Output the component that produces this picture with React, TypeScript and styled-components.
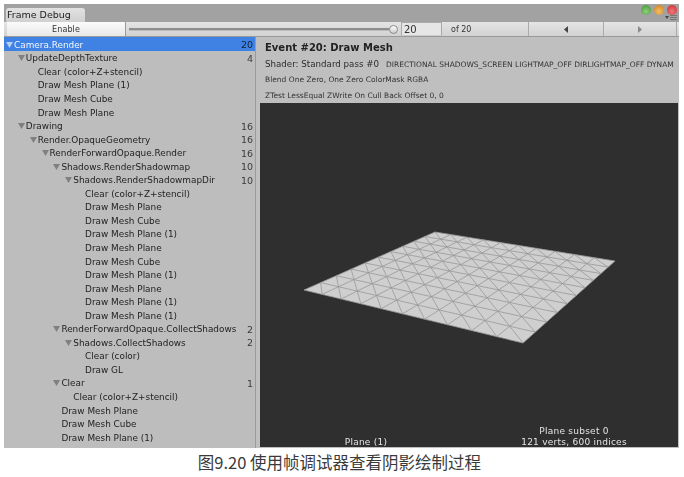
import React from "react";
import styled, { createGlobalStyle } from "styled-components";

const Global = createGlobalStyle`
  html, body { margin: 0; padding: 0; background: #fff; }
  #root { width: 684px; height: 477px; overflow: hidden; }
  * { box-sizing: border-box; }
`;

const FONT = `"DejaVu Sans", "Noto Sans CJK SC", sans-serif`;

const Page = styled.div`
  width: 684px; height: 477px; padding: 4px 5px 0 4px;
  display: flex; flex-direction: column; background: #fff;
  font-family: ${FONT}; color: #222;
`;
const Win = styled.div`
  height: 444px; display: flex; flex-direction: column; background: #bfbfbf;
  filter: blur(0.3px);
`;
const TabBar = styled.div`
  height: 18px; flex: none; background: #a2a2a2; padding: 4px 2px 0 2px;
  display: flex; justify-content: space-between;
`;
const Tab = styled.div`
  width: 79px; height: 14px; background: linear-gradient(#e2e2e2, #d0d0d0);
  border-radius: 3px 3px 0 0; font-size: 9.5px; line-height: 14px; padding-left: 1px; color: #222;
`;
const Controls = styled.div`
  display: flex; flex-direction: column; align-items: flex-end; gap: 0; margin-top: -3px;
`;
const Lights = styled.div`display: flex; gap: 3px;`;
const Light = styled.span<{ $c: string; $d: string }>`
  width: 10px; height: 10px; border-radius: 50%;
  background: radial-gradient(circle at 50% 65%, ${p => p.$c}, ${p => p.$d});
`;
const Toolbar = styled.div`
  height: 15px; flex: none; display: flex; align-items: stretch;
  background: linear-gradient(#e4e4e4, #d2d2d2); border-bottom: 1px solid #999;
  padding-left: 3px;
`;
const EnableBtn = styled.div`
  width: 119px; background: linear-gradient(#fbfbfb, #e8e8e8); text-align: center;
  font-size: 8px; line-height: 15px; color: #333; border-right: 1px solid #999; letter-spacing: 0.1px;
`;
const SliderBox = styled.div`
  width: 275px; padding: 0 3px 0 3px; display: flex; align-items: center; position: relative;
`;
const Track = styled.div`flex: 1; height: 3px; background: #8d8d8d; border-bottom: 1px solid #bbb;`;
const Thumb = styled.div`
  width: 9px; height: 9px; border-radius: 50%; background: linear-gradient(#fff, #ccc);
  border: 1px solid #8a8a8a; flex: none;
`;
const CountInput = styled.div`
  width: 41px; background: #e6e6e6; border: 1px solid #aaa; border-bottom-color: #ccc;
  font-size: 10px; line-height: 13px; padding-left: 2px; color: #333;
`;
const OfLabel = styled.div`
  width: 87px; padding-left: 9px; font-size: 8px; line-height: 15px; color: #333;
  border-right: 1px solid #aaa;
`;
const StepBtn = styled.div<{ $w: number }>`
  width: ${p => p.$w}px; display: flex; align-items: center; justify-content: center;
  border-right: 1px solid #aaa;
`;
const Body = styled.div`flex: 1; display: flex; min-height: 0;`;
const Tree = styled.div`width: 251px; flex: none; background: #bdbdbd;`;
const Row = styled.div<{ $sel?: boolean }>`
  height: 13.55px; display: flex; align-items: center; font-size: 8.9px;
  white-space: nowrap; padding: 2px 2px 0 0; color: ${p => (p.$sel ? "#f2f6ff" : "#222")};
  background: ${p => (p.$sel ? "#3f82e4" : "transparent")};
`;
const Label = styled.span<{ $level: number }>`
  flex: 1; padding-left: ${p => 10 + p.$level * 11.85}px; position: relative;
`;
const Arrow = styled.svg`
  position: absolute; margin-left: -8px; top: 2px; width: 7px; height: 6px;
`;
const Count = styled.span<{ $sel?: boolean }>`
  color: ${p => (p.$sel ? "#123" : "#3a3a3a")}; font-size: 9.5px;
`;
const Divider = styled.div`width: 3px; flex: none; background: #bfbfbf; border-left: 1px solid #9a9a9a;`;
const Detail = styled.div`flex: 1; min-width: 0; display: flex; flex-direction: column; padding: 0 1px 1px 2px; overflow: hidden;`;
const Info = styled.div`height: 66px; flex: none; padding-left: 5px; white-space: nowrap; overflow: hidden;`;
const InfoLine = styled.div<{ $h: number }>`
  height: ${p => p.$h}px; display: flex; align-items: center;
`;
const EventTitle = styled.span`font-size: 10px; font-weight: bold; color: #222;`;
const ShaderText = styled.span`font-size: 8.7px; color: #2c2c2c; margin-right: 7px;`;
const Small = styled.span`font-size: 7.5px; color: #333;`;
const Preview = styled.div`
  flex: 1; background: #2f2f2f; position: relative; display: flex; align-items: flex-end;
`;
const MeshSvg = styled.svg`position: absolute; left: 0; top: 0;`;
const Stats = styled.div`
  flex: 1; display: grid; grid-template-columns: 1fr 1fr; align-items: end; position: relative;
  font-size: 9px; line-height: 11px; color: #e4e4e4; text-align: center; letter-spacing: 0.25px;
  margin-bottom: -1px; padding-left: 2px;
`;
const Caption = styled.div`
  text-align: center; font-size: 16.5px; line-height: 22px; margin-top: 3px; color: #3a3a3a;
  font-family: "Noto Sans CJK SC", sans-serif; padding-right: 4px;
`;

type R = { t: string; l: number; o?: boolean; c?: number };
const rows: R[] = [
  { t: "UpdateDepthTexture", l: 1, o: true, c: 4 },
  { t: "Clear (color+Z+stencil)", l: 2 },
  { t: "Draw Mesh Plane (1)", l: 2 },
  { t: "Draw Mesh Cube", l: 2 },
  { t: "Draw Mesh Plane", l: 2 },
  { t: "Drawing", l: 1, o: true, c: 16 },
  { t: "Render.OpaqueGeometry", l: 2, o: true, c: 16 },
  { t: "RenderForwardOpaque.Render", l: 3, o: true, c: 16 },
  { t: "Shadows.RenderShadowmap", l: 4, o: true, c: 10 },
  { t: "Shadows.RenderShadowmapDir", l: 5, o: true, c: 10 },
  { t: "Clear (color+Z+stencil)", l: 6 },
  { t: "Draw Mesh Plane", l: 6 },
  { t: "Draw Mesh Cube", l: 6 },
  { t: "Draw Mesh Plane (1)", l: 6 },
  { t: "Draw Mesh Plane", l: 6 },
  { t: "Draw Mesh Cube", l: 6 },
  { t: "Draw Mesh Plane (1)", l: 6 },
  { t: "Draw Mesh Plane", l: 6 },
  { t: "Draw Mesh Plane (1)", l: 6 },
  { t: "Draw Mesh Plane (1)", l: 6 },
  { t: "RenderForwardOpaque.CollectShadows", l: 4, o: true, c: 2 },
  { t: "Shadows.CollectShadows", l: 5, o: true, c: 2 },
  { t: "Clear (color)", l: 6 },
  { t: "Draw GL", l: 6 },
  { t: "Clear", l: 4, o: true, c: 1 },
  { t: "Clear (color+Z+stencil)", l: 5 },
  { t: "Draw Mesh Plane", l: 4 },
  { t: "Draw Mesh Cube", l: 4 },
  { t: "Draw Mesh Plane (1)", l: 4 },
];

const Tri = ({ color }: { color: string }) => (
  <Arrow viewBox="0 0 7 6"><path d="M0 0H7L3.5 6Z" fill={color} /></Arrow>
);

// Plane corners in preview coordinates (preview origin is 260,103 on the page)
const P = { a: [175, 129], b: [355, 158], c: [263, 240], d: [44, 187] };
function project(u: number, v: number): [number, number] {
  const [x0, y0] = P.a, [x1, y1] = P.b, [x2, y2] = P.c, [x3, y3] = P.d;
  const dx1 = x1 - x2, dx2 = x3 - x2, sx = x0 - x1 + x2 - x3;
  const dy1 = y1 - y2, dy2 = y3 - y2, sy = y0 - y1 + y2 - y3;
  const den = dx1 * dy2 - dx2 * dy1;
  const g = (sx * dy2 - dx2 * sy) / den, h = (dx1 * sy - sx * dy1) / den;
  const A = x1 - x0 + g * x1, B = x3 - x0 + h * x3;
  const D = y1 - y0 + g * y1, E = y3 - y0 + h * y3;
  const w = g * u + h * v + 1;
  return [(A * u + B * v + x0) / w, (D * u + E * v + y0) / w];
}
function meshPath() {
  const n = 10; let d = "";
  const seg = (p: [number, number], q: [number, number]) =>
    (d += `M${p[0].toFixed(1)} ${p[1].toFixed(1)}L${q[0].toFixed(1)} ${q[1].toFixed(1)}`);
  for (let i = 0; i <= n; i++) {
    seg(project(i / n, 0), project(i / n, 1));
    seg(project(0, i / n), project(1, i / n));
  }
  // diagonals run the way of the top-to-bottom corner line of the plane
  for (let i = 1 - n; i < n; i++) {
    const s = i / n;
    const from = s >= 0 ? [s, 0] : [0, -s];
    const to = s >= 0 ? [1, 1 - s] : [1 + s, 1];
    seg(project(from[0], from[1]), project(to[0], to[1]));
  }
  return d;
}

export default function App() {
  return (
    <Page>
      <Global />
      <Win>
        <TabBar>
          <Tab>Frame Debug</Tab>
          <Controls>
            <Lights>
              <Light $c="#8fd07a" $d="#3f8f35" />
              <Light $c="#f3c065" $d="#c97c1c" />
              <Light $c="#f2767a" $d="#c62b2f" />
            </Lights>
            <svg width="12" height="5" viewBox="0 0 12 5">
              <path d="M0 1H4L2 4Z" fill="#444" />
              <path d="M5 0H12V1H5ZM5 2H12V3H5ZM5 4H12V5H5Z" fill="#777" />
            </svg>
          </Controls>
        </TabBar>
        <Toolbar>
          <EnableBtn>Enable</EnableBtn>
          <SliderBox><Track /><Thumb /></SliderBox>
          <CountInput>20</CountInput>
          <OfLabel>of 20</OfLabel>
          <StepBtn $w={75}>
            <svg width="4" height="7" viewBox="0 0 4 7"><path d="M4 0V7L0 3.5Z" fill="#444" /></svg>
          </StepBtn>
          <StepBtn $w={73}>
            <svg width="4" height="7" viewBox="0 0 4 7"><path d="M0 0V7L4 3.5Z" fill="#8a8a8a" /></svg>
          </StepBtn>
        </Toolbar>
        <Body>
          <Tree>
            <Row $sel>
              <Label $level={0}><Tri color="#b9d0f2" />Camera.Render</Label>
              <Count $sel>20</Count>
            </Row>
            {rows.map((r, i) => (
              <Row key={i}>
                <Label $level={r.l}>{r.o && <Tri color="#808080" />}{r.t}</Label>
                {r.c !== undefined && <Count>{r.c}</Count>}
              </Row>
            ))}
          </Tree>
          <Divider />
          <Detail>
            <Info>
              <InfoLine $h={20}><EventTitle>Event #20: Draw Mesh</EventTitle></InfoLine>
              <InfoLine $h={14}>
                <ShaderText>Shader: Standard pass #0</ShaderText>
                <Small>DIRECTIONAL SHADOWS_SCREEN LIGHTMAP_OFF DIRLIGHTMAP_OFF DYNAM</Small>
              </InfoLine>
              <InfoLine $h={16}><Small>Blend One Zero, One Zero ColorMask RGBA</Small></InfoLine>
              <InfoLine $h={16}><Small>ZTest LessEqual ZWrite On Cull Back Offset 0, 0</Small></InfoLine>
            </Info>
            <Preview>
              <MeshSvg width="418" height="344" viewBox="0 0 418 344">
                <polygon points={[P.a, P.b, P.c, P.d].map(p => p.join(",")).join(" ")} fill="#cfcfcf" />
                <path d={meshPath()} stroke="#989898" strokeWidth="0.8" fill="none" />
              </MeshSvg>
              <Stats>
                <div>Plane (1)</div>
                <div>Plane subset 0<br />121 verts, 600 indices</div>
              </Stats>
            </Preview>
          </Detail>
        </Body>
      </Win>
      <Caption>图9.20 使用帧调试器查看阴影绘制过程</Caption>
    </Page>
  );
}
